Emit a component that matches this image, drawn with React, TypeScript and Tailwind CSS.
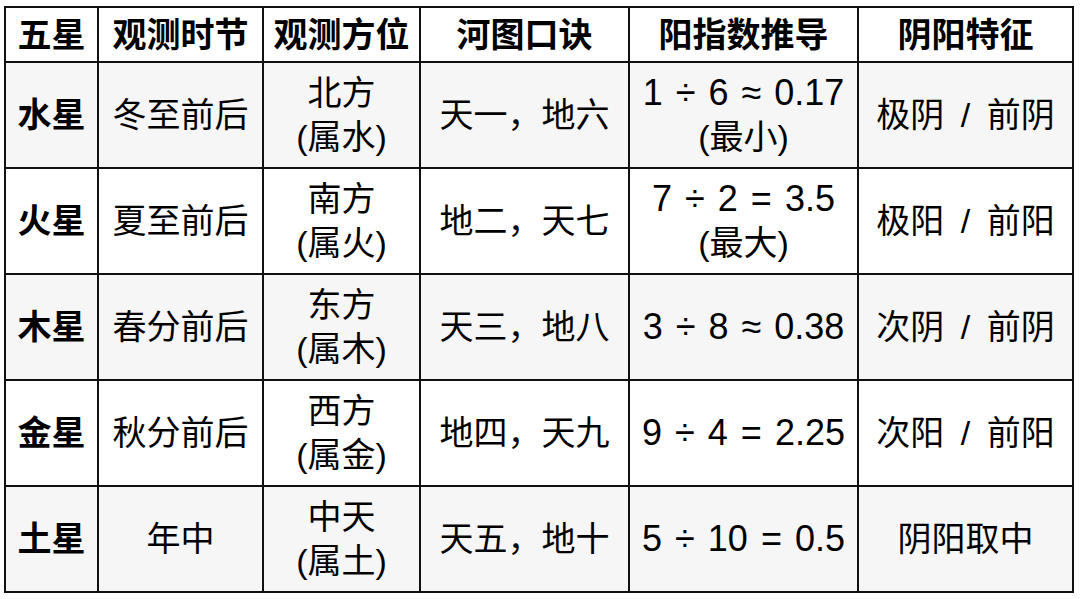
const rows = [
  { star: "水星", time: "冬至前后", dir: ["北方", "(属水)"], hetu: "天一，地六", yang: ["1 ÷ 6 ≈ 0.17", "(最小)"], trait: "极阴 / 前阴" },
  { star: "火星", time: "夏至前后", dir: ["南方", "(属火)"], hetu: "地二，天七", yang: ["7 ÷ 2 = 3.5", "(最大)"], trait: "极阳 / 前阳" },
  { star: "木星", time: "春分前后", dir: ["东方", "(属木)"], hetu: "天三，地八", yang: ["3 ÷ 8 ≈ 0.38"], trait: "次阴 / 前阴" },
  { star: "金星", time: "秋分前后", dir: ["西方", "(属金)"], hetu: "地四，天九", yang: ["9 ÷ 4 = 2.25"], trait: "次阳 / 前阳" },
  { star: "土星", time: "年中", dir: ["中天", "(属土)"], hetu: "天五，地十", yang: ["5 ÷ 10 = 0.5"], trait: "阴阳取中" },
]

const headers = ["五星", "观测时节", "观测方位", "河图口诀", "阳指数推导", "阴阳特征"]

const cell = "border-2 border-[#111] p-0 text-center whitespace-nowrap"

export default function App() {
  return (
    <div className="w-[1080px] h-[599px] bg-white pt-[6px] pl-[4px] font-['Liberation_Sans','Noto_Sans_CJK_SC',sans-serif] text-black">
      <table className="w-[1070px] table-fixed border-collapse text-[34px] leading-[44px]">
        <colgroup>
          <col className="w-[93px]" />
          <col className="w-[165px]" />
          <col className="w-[157px]" />
          <col className="w-[209px]" />
          <col className="w-[229px]" />
          <col className="w-[215px]" />
        </colgroup>
        <thead>
          <tr className="h-[55px] bg-white">
            {headers.map((h) => (
              <th key={h} className={`${cell} font-bold`}>
                {h}
              </th>
            ))}
          </tr>
        </thead>
        <tbody>
          {rows.map((r, i) => (
            <tr key={r.star} className={`h-[106px] ${i % 2 === 0 ? "bg-[#f6f6f6]" : "bg-white"}`}>
              <td className={`${cell} font-bold`}>{r.star}</td>
              <td className={cell}>{r.time}</td>
              <td className={cell}>
                {r.dir.map((l) => (
                  <div key={l}>{l}</div>
                ))}
              </td>
              <td className={cell}>{r.hetu}</td>
              <td className={cell}>
                <div className="text-[36px] [word-spacing:3px]">{r.yang[0]}</div>
                {r.yang[1] && <div>{r.yang[1]}</div>}
              </td>
              <td className={`${cell} [word-spacing:7px]`}>{r.trait}</td>
            </tr>
          ))}
        </tbody>
      </table>
    </div>
  )
}
